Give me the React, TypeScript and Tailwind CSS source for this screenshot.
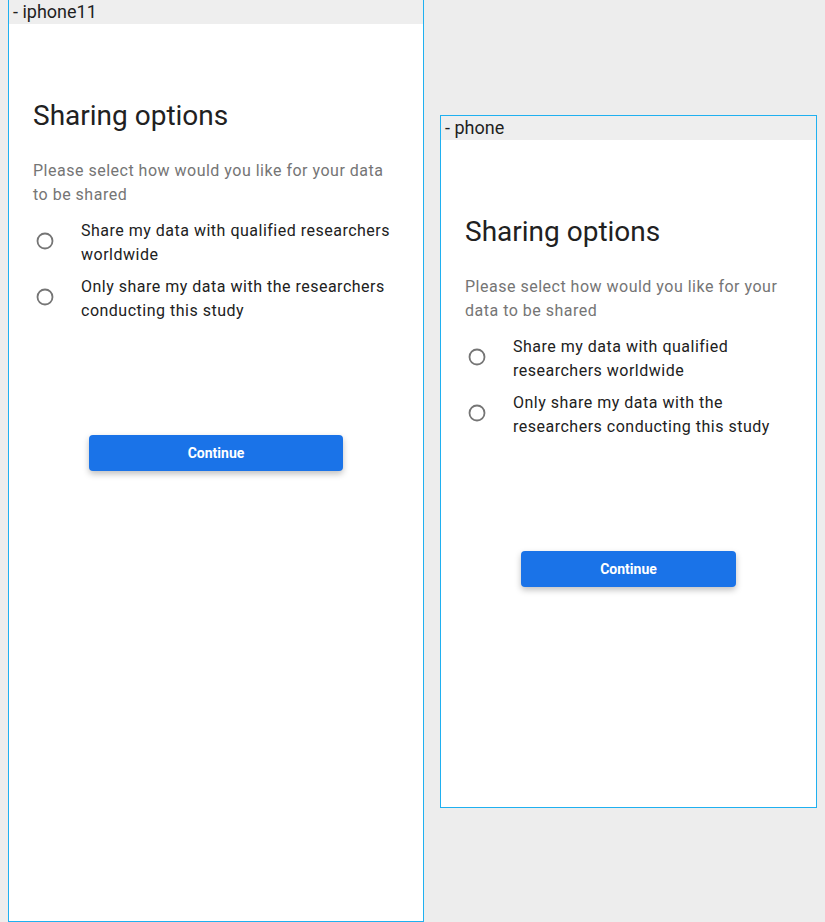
import React from "react";

const font = { fontFamily: "Roboto, 'Noto Sans', sans-serif" };

function RadioIcon() {
  return (
    <svg className="h-6 w-6 shrink-0" viewBox="0 0 24 24" fill="none">
      <circle cx="12" cy="10" r="7.5" stroke="#757575" strokeWidth="1.8" />
    </svg>
  );
}

const options = [
  "Share my data with qualified researchers worldwide",
  "Only share my data with the researchers conducting this study",
];

function SharingScreen() {
  return (
    <div className="flex flex-col px-6 pt-[74px]">
      <h1 className="text-[28px] leading-[36px] font-normal text-[#212121]">Sharing options</h1>
      <p className="mt-[25px] text-base leading-6 tracking-[0.5px] text-[#757575]">
        Please select how would you like for your data to be shared
      </p>
      <div className="mt-[12px] flex flex-col gap-2">
        {options.map((o) => (
          <label key={o} className="flex items-center gap-6">
            <RadioIcon />
            <span className="text-base leading-6 tracking-[0.5px] text-[#212121]">{o}</span>
          </label>
        ))}
      </div>
      <button className="mx-14 mt-[112px] h-9 rounded bg-[#1a73e8] text-sm font-bold text-white shadow-[0_3px_6px_rgba(0,0,0,0.25)]">
        Continue
      </button>
    </div>
  );
}

function Frame({ label, className }: { label: string; className: string }) {
  return (
    <div className={"flex flex-col border-[#1fb0f0] bg-white " + className}>
      <div className="h-6 bg-[#eeeeee] pl-1 text-[18px] leading-6 text-[#1f1f1f]">- {label}</div>
      <SharingScreen />
    </div>
  );
}

export default function App() {
  return (
    <div className="flex min-h-screen items-start gap-4 overflow-hidden bg-[#ededed] pl-2" style={font}>
      <Frame label="iphone11" className="h-[922px] w-[416px] shrink-0 border-x border-b" />
      <Frame label="phone" className="mt-[115px] h-[693px] w-[377px] shrink-0 border" />
    </div>
  );
}
